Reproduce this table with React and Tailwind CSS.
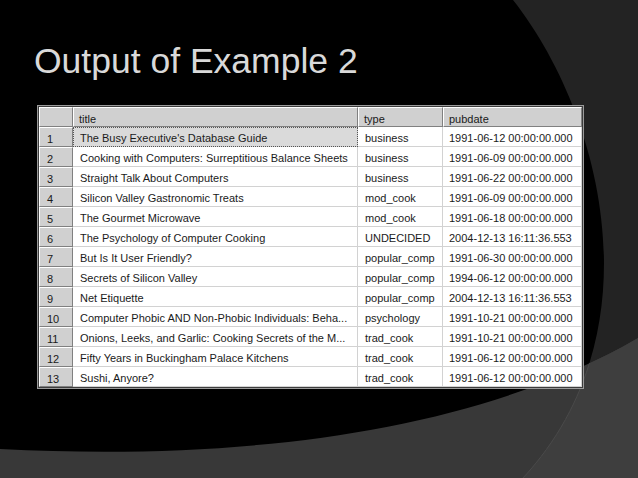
const rows = [
  ["The Busy Executive's Database Guide", "business", "1991-06-12 00:00:00.000"],
  ["Cooking with Computers: Surreptitious Balance Sheets", "business", "1991-06-09 00:00:00.000"],
  ["Straight Talk About Computers", "business", "1991-06-22 00:00:00.000"],
  ["Silicon Valley Gastronomic Treats", "mod_cook", "1991-06-09 00:00:00.000"],
  ["The Gourmet Microwave", "mod_cook", "1991-06-18 00:00:00.000"],
  ["The Psychology of Computer Cooking", "UNDECIDED", "2004-12-13 16:11:36.553"],
  ["But Is It User Friendly?", "popular_comp", "1991-06-30 00:00:00.000"],
  ["Secrets of Silicon Valley", "popular_comp", "1994-06-12 00:00:00.000"],
  ["Net Etiquette", "popular_comp", "2004-12-13 16:11:36.553"],
  ["Computer Phobic AND Non-Phobic Individuals: Beha...", "psychology", "1991-10-21 00:00:00.000"],
  ["Onions, Leeks, and Garlic: Cooking Secrets of the M...", "trad_cook", "1991-10-21 00:00:00.000"],
  ["Fifty Years in Buckingham Palace Kitchens", "trad_cook", "1991-06-12 00:00:00.000"],
  ["Sushi, Anyore?", "trad_cook", "1991-06-12 00:00:00.000"],
];

const Backdrop = () => (
  <svg className="absolute inset-0" width="638" height="478" viewBox="0 0 638 478">
    <defs>
      <clipPath id="lower">
        <path d="M0,449 C250,462 480,430 638,338 L638,478 L0,478 Z" />
      </clipPath>
    </defs>
    {/* right dark swoosh */}
    <path d="M513,0 C600,110 660,330 523,478 L638,478 L638,0 Z" fill="#232323" />
    {/* lower band */}
    <path d="M0,449 C250,462 480,430 638,338 L638,478 L0,478 Z" fill="#383838" />
    <g clipPath="url(#lower)">
      <path d="M513,0 C600,110 660,330 523,478 L638,478 L638,0 Z" fill="#3e3e3e" />
      <path d="M513,0 C600,110 660,330 523,478" fill="none" stroke="#4a4a4a" strokeWidth="1" />
    </g>
  </svg>
);

const HeadCell = ({ children }) => (
  <div className="h-[20px] overflow-hidden bg-[#d0d0d0] border-t border-l border-t-white border-l-white border-r border-b border-r-[#808080] border-b-[#808080] pl-[5px] leading-[22px] text-[11px] text-[#1a1a1a]">
    {children}
  </div>
);

const Cell = ({ children, className = "" }) => (
  <div className={`h-[20px] bg-white border-r border-b border-[#d2d2d2] pl-[7px] leading-[23px] text-[11px] text-[#1a1a1a] whitespace-nowrap overflow-hidden ${className}`}>
    {children}
  </div>
);

export default function App() {
  return (
    <div className="relative w-[638px] h-[478px] bg-black overflow-hidden" style={{ fontFamily: '"Liberation Sans", Arial, sans-serif' }}>
      <Backdrop />
      <div className="relative flex flex-col">
        {/* Slide title */}
        <h1 className="ml-[34px] mt-[44px] h-[35px] text-[35.5px] leading-none font-normal text-[#d9d9d9]">
          Output of Example 2
        </h1>

        {/* Result grid */}
        <div className="ml-[37px] mt-[26px] w-[547px] border border-[#9a9a9a]">
          <div className="border border-[#3c3c3c] grid grid-cols-[34px_285px_85px_139px]">
            <HeadCell />
            <HeadCell>title</HeadCell>
            <HeadCell>type</HeadCell>
            <HeadCell>pubdate</HeadCell>
            {rows.map((r, i) => (
              <div key={i} className="contents">
                <HeadCell>
                  <span className="pl-[2px]">{i + 1}</span>
                </HeadCell>
                <Cell className={i === 0 ? "!bg-[#dadada] outline-1 outline-dotted outline-[#555] -outline-offset-1" : ""}>
                  {r[0]}
                </Cell>
                <Cell>{r[1]}</Cell>
                <Cell className="!pl-[6px]">{r[2]}</Cell>
              </div>
            ))}
          </div>
        </div>
      </div>
    </div>
  );
}
